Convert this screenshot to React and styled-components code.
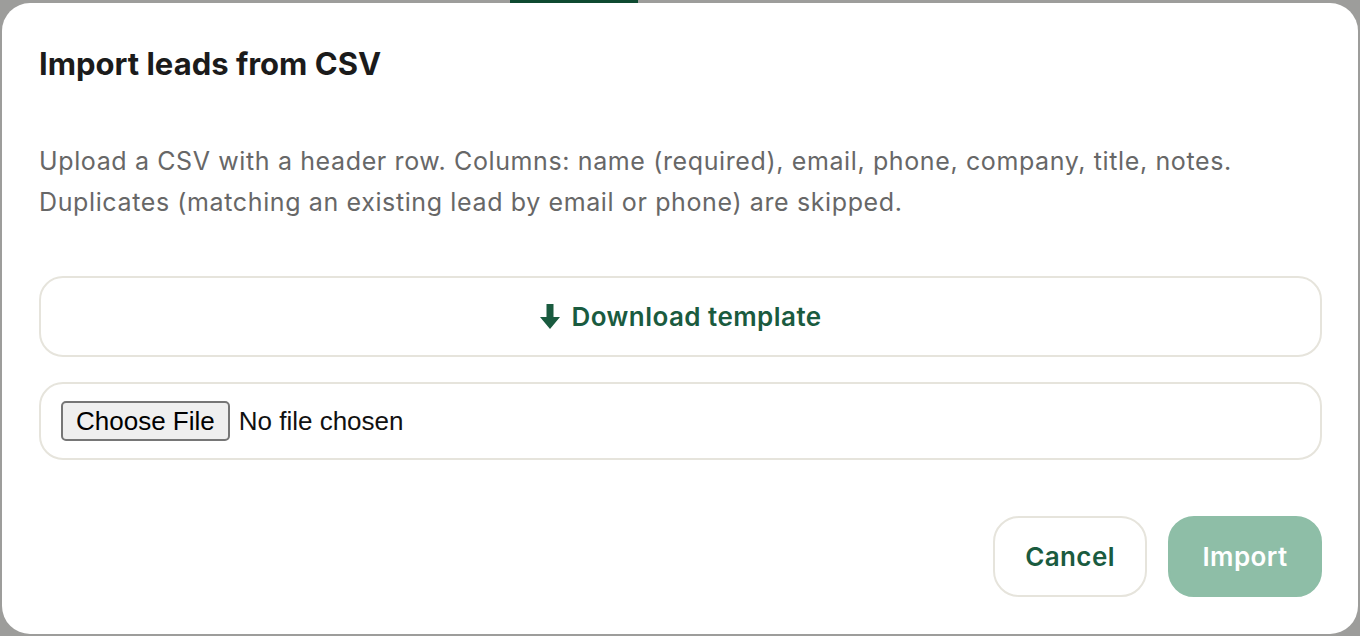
import React from "react";
import styled, { createGlobalStyle } from "styled-components";

const GlobalStyle = createGlobalStyle`
  html, body { margin: 0; padding: 0; height: 100%; }
  body {
    background: #9d9d9b;
    font-family: "Inter", "Noto Sans", sans-serif;
    overflow: hidden;
  }
  * { box-sizing: border-box; }
`;

const Page = styled.div`
  position: relative;
  width: 1360px;
  height: 636px;
  overflow: hidden;
`;

const BehindBar = styled.div`
  display: flex;
  height: 3px;
`;

const BehindTab = styled.div`
  margin-left: 510px;
  width: 128px;
  height: 3px;
  background: #0f4a31;
`;

const Overlay = styled.div`
  position: absolute;
  inset: 0;
  display: flex;
  padding: 3px 2px 2px 2px;
`;

const Dialog = styled.div`
  flex: 1;
  background: #ffffff;
  border-radius: 28px;
  padding: 37px 36px 37px 37px;
  display: flex;
  flex-direction: column;
`;

const Title = styled.h2`
  margin: 0;
  margin-top: 6px;
  font-size: 31px;
  line-height: 36px;
  font-weight: 700;
  color: #1b1b1b;
  letter-spacing: 0;
`;

const Description = styled.p`
  margin: 59px 0 0 0;
  font-size: 25px;
  line-height: 41px;
  letter-spacing: 0.62px;
  color: #676767;
  font-weight: 400;
`;

const OutlineBox = styled.div`
  border: 2px solid #e6e4dc;
  border-radius: 24px;
  background: #ffffff;
`;

const TemplateButton = styled.button`
  margin-top: 53px;
  height: 81px;
  width: 100%;
  border: 2px solid #e6e4dc;
  border-radius: 24px;
  background: #ffffff;
  display: flex;
  align-items: center;
  justify-content: center;
  gap: 10px;
  color: #1a5b3f;
  font-family: inherit;
  font-size: 26px;
  letter-spacing: 0.45px;
  font-weight: 600;
  cursor: pointer;
`;

const FileBox = styled(OutlineBox)`
  margin-top: 25px;
  height: 78px;
  display: flex;
  align-items: center;
  padding: 0 20px;
`;

const FileInput = styled.input`
  font-family: "Liberation Sans", Arial, sans-serif;
  font-size: 26px;
  color: #111111;
  &::file-selector-button {
    font-family: "Liberation Sans", Arial, sans-serif;
    font-size: 26px;
    color: #000000;
    background: #efefef;
    border: 2px solid #767676;
    border-radius: 5px;
    padding: 2px 13px;
    margin-right: 9px;
    height: 40px;
  }
`;

const Footer = styled.div`
  margin-top: auto;
  display: flex;
  justify-content: flex-end;
  gap: 21px;
`;

const ActionButton = styled.button`
  height: 81px;
  min-width: 154px;
  padding: 0 30px;
  border-radius: 26px;
  font-family: inherit;
  font-size: 26px;
  letter-spacing: 0.4px;
  font-weight: 600;
  cursor: pointer;
  border: 2px solid ${(p) => (p.$primary ? "#8ebea7" : "#e6e4dc")};
  background: ${(p) => (p.$primary ? "#8ebea7" : "#ffffff")};
  color: ${(p) => (p.$primary ? "#ffffff" : "#1a5b3f")};
`;

const ArrowIcon = () => (
  <svg width="22" height="27" viewBox="0 0 22 27" aria-hidden="true">
    <path d="M7.5 1h7v13h6.5L11 26 1 14h6.5z" fill="#1a5b3f" />
  </svg>
);

export default function App() {
  return (
    <>
      <GlobalStyle />
      <Page>
        <BehindBar>
          <BehindTab />
        </BehindBar>
        <Overlay>
          <Dialog role="dialog" aria-label="Import leads from CSV">
            <Title>Import leads from CSV</Title>
            <Description>
              Upload a CSV with a header row. Columns: name (required), email, phone, company, title, notes.
              <br />
              Duplicates (matching an existing lead by email or phone) are skipped.
            </Description>
            <TemplateButton type="button">
              <ArrowIcon />
              Download template
            </TemplateButton>
            <FileBox>
              <FileInput type="file" accept=".csv" />
            </FileBox>
            <Footer>
              <ActionButton type="button">Cancel</ActionButton>
              <ActionButton type="button" $primary disabled>
                Import
              </ActionButton>
            </Footer>
          </Dialog>
        </Overlay>
      </Page>
    </>
  );
}
